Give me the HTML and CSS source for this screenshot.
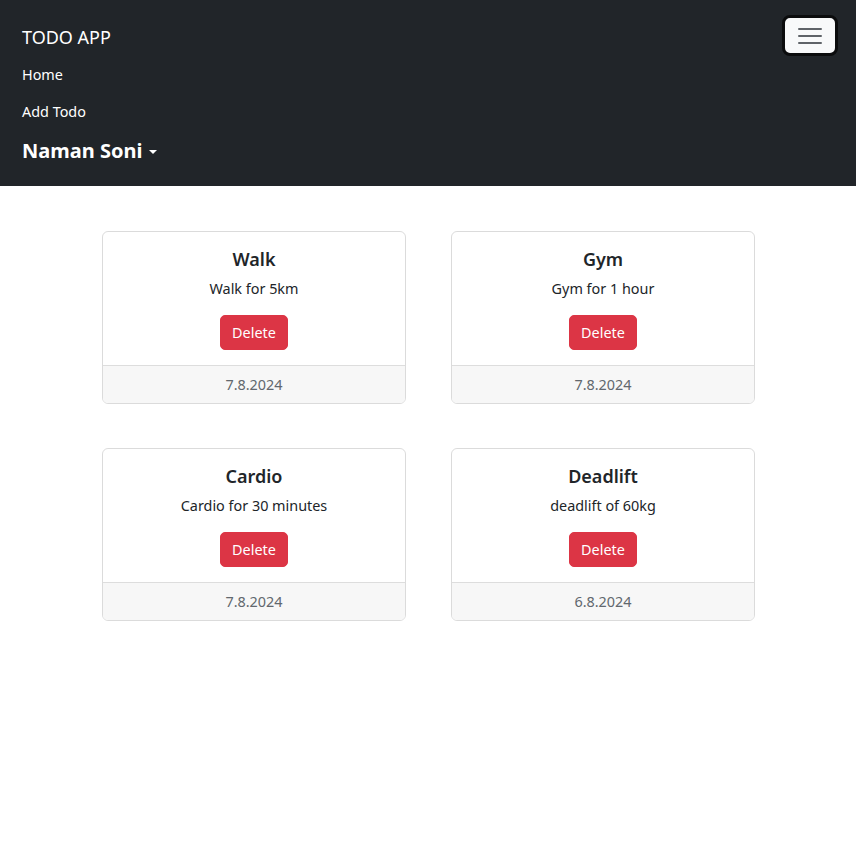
FILE: index.html
```html
<!DOCTYPE html>
<html lang="en">
<head>
<meta charset="utf-8">
<title>TODO APP</title>
<link rel="stylesheet" href="styles.css">
</head>
<body>
<nav class="navbar">
  <div class="top-row">
    <a class="brand" href="#">TODO APP</a>
    <button class="toggler" type="button" aria-label="Toggle navigation">
      <svg width="24" height="20" viewBox="0 0 24 20" aria-hidden="true">
        <path d="M1 3h22M1 10h22M1 17h22" stroke="#5f6368" stroke-width="2" stroke-linecap="round"/>
      </svg>
    </button>
  </div>
  <ul class="nav-list">
    <li class="nav-item"><a class="nav-link" href="#">Home</a></li>
    <li class="nav-item"><a class="nav-link" href="#">Add Todo</a></li>
    <li class="nav-item user"><a class="nav-link user-link" href="#"><span class="user-name">Naman Soni</span><span class="caret"></span></a></li>
  </ul>
</nav>

<main class="content">
  <div class="card">
    <div class="card-body">
      <h5 class="card-title">Walk</h5>
      <p class="card-text">Walk for 5km</p>
      <button class="btn-delete" type="button">Delete</button>
    </div>
    <div class="card-footer">7.8.2024</div>
  </div>
  <div class="card">
    <div class="card-body">
      <h5 class="card-title">Gym</h5>
      <p class="card-text">Gym for 1 hour</p>
      <button class="btn-delete" type="button">Delete</button>
    </div>
    <div class="card-footer">7.8.2024</div>
  </div>
  <div class="card">
    <div class="card-body">
      <h5 class="card-title">Cardio</h5>
      <p class="card-text">Cardio for 30 minutes</p>
      <button class="btn-delete" type="button">Delete</button>
    </div>
    <div class="card-footer">7.8.2024</div>
  </div>
  <div class="card">
    <div class="card-body">
      <h5 class="card-title">Deadlift</h5>
      <p class="card-text">deadlift of 60kg</p>
      <button class="btn-delete" type="button">Delete</button>
    </div>
    <div class="card-footer">6.8.2024</div>
  </div>
</main>
</body>
</html>
```

FILE: styles.css
```css
* { box-sizing: border-box; }

body {
  margin: 0;
  font-family: "Noto Sans", "Open Sans", sans-serif;
  font-size: 14.4px;
  line-height: 1.5;
  color: #212529;
  background: #ffffff;
}

a { text-decoration: none; }

.navbar {
  background: #212529;
  padding: 18px 18px 14px 22px;
}

.top-row {
  display: flex;
  justify-content: space-between;
  align-items: center;
  height: 38px;
}

.brand {
  color: #ffffff;
  font-size: 18px;
  line-height: 27px;
}

.toggler {
  width: 56px;
  height: 41px;
  margin-top: -3px;
  background: #f8f9fa;
  border: 3px solid #0b0c0d;
  border-radius: 8px;
  display: flex;
  align-items: center;
  justify-content: center;
  padding: 0;
}

.nav-list {
  list-style: none;
  margin: 0;
  padding: 0;
  display: flex;
  flex-direction: column;
}

.nav-item {
  height: 37px;
  display: flex;
  align-items: center;
}

.nav-item.user { height: 42px; }

.nav-link {
  color: #ffffff;
  font-size: 14.4px;
  line-height: 21.6px;
}

.user-link {
  display: flex;
  align-items: center;
}

.user-name {
  font-size: 20px;
  font-weight: 700;
  line-height: 28px;
}

.caret {
  width: 0;
  height: 0;
  margin-left: 7px;
  margin-top: 2px;
  border-top: 4.5px solid #ffffff;
  border-left: 4px solid transparent;
  border-right: 4px solid transparent;
}

.content {
  width: 653px;
  margin: 45px 0 0 102px;
  display: grid;
  grid-template-columns: 304px 304px;
  column-gap: 45px;
  row-gap: 44px;
}

.card {
  border: 1px solid rgba(0, 0, 0, 0.14);
  border-radius: 6px;
  overflow: hidden;
  display: flex;
  flex-direction: column;
}

.card-body {
  padding: 15px 15px 15px;
  text-align: center;
  display: flex;
  flex-direction: column;
  align-items: center;
}

.card-title {
  margin: 0 0 7px;
  font-size: 18px;
  font-weight: 600;
  line-height: 24px;
  color: #212529;
}

.card-text {
  margin: 0 0 15px;
  font-size: 14.4px;
  line-height: 22px;
}

.btn-delete {
  font-family: inherit;
  font-size: 14.4px;
  line-height: 21px;
  color: #ffffff;
  background: #dc3545;
  border: 1px solid #dc3545;
  border-radius: 5px;
  padding: 6px 11px;
  height: 35px;
}

.card-footer {
  height: 38px;
  border-top: 1px solid rgba(0, 0, 0, 0.1);
  background: #f7f7f7;
  color: #62686e;
  text-align: center;
  font-size: 14.4px;
  line-height: 37px;
}
```
